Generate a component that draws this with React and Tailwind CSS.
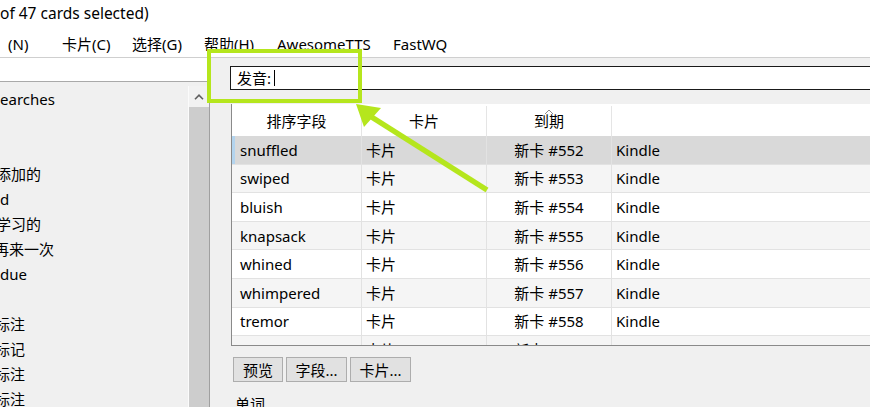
const menus = [
  ['(N)', 'w-[54px]'],
  ['卡片(C)', 'w-[70px]'],
  ['选择(G)', 'w-[72px]'],
  ['帮助(H)', 'w-[73px]'],
  ['AwesomeTTS', 'w-[116px]'],
  ['FastWQ', 'w-[80px]'],
];

// sidebar rows, 25px apart; negative margins cut off the leading chars like the clipped tree
const side = [
  ['earches', 'ml-0'],
  ['', 'ml-0'],
  ['', 'ml-0'],
  ['添加的', 'ml-[-4px]'],
  ['d', 'ml-0'],
  ['学习的', 'ml-[-4px]'],
  ['再来一次', 'ml-[-6px]'],
  ['due', 'ml-0'],
  ['', 'ml-0'],
  ['标注', 'ml-[-5px]'],
  ['标记', 'ml-[-5px]'],
  ['标注', 'ml-[-5px]'],
  ['标注', 'ml-[-5px]'],
];

const cards = [
  ['snuffled', '新卡 #552'],
  ['swiped', '新卡 #553'],
  ['bluish', '新卡 #554'],
  ['knapsack', '新卡 #555'],
  ['whined', '新卡 #556'],
  ['whimpered', '新卡 #557'],
  ['tremor', '新卡 #558'],
  ['sneaked', '新卡 #559'],
];

function Row({ word, due, idx }) {
  const selected = idx === 0;
  const bg = selected ? 'bg-[#d9d9d9]' : idx % 2 === 1 ? 'bg-[#f5f5f5]' : 'bg-white';
  return (
    <div className={`flex h-[28.6px] shrink-0 border-b border-[#e2e2e2] ${bg}`}>
      <div className={`w-[130px] flex items-center pl-[5px] border-l-[3px] border-r border-r-[#e2e2e2] ${selected ? 'border-l-[#b3d4ee]' : 'border-l-transparent'}`}>{word}</div>
      <div className="w-[125px] flex items-center pl-[4px] border-r border-[#e2e2e2]">卡片</div>
      <div className="w-[125px] flex items-center justify-center border-r border-[#e2e2e2]">{due}</div>
      <div className="flex-1 flex items-center pl-[4px]">Kindle</div>
    </div>
  );
}

export default function App() {
  return (
    <div className="relative w-[870px] h-[407px] overflow-hidden bg-white text-black font-['Noto_Sans','Noto_Sans_CJK_SC',sans-serif]">
      <div className="h-[28px] flex items-center text-[15.5px] leading-none whitespace-nowrap">of 47 cards selected)</div>

      <div className="h-[29px] flex items-center pl-[8px] pt-[3px] text-[15px] leading-none whitespace-nowrap">
        {menus.map(([m, w]) => (
          <span key={m} className={`${w} shrink-0`}>{m}</span>
        ))}
      </div>

      <div className="flex h-[350px] border-t border-[#cfcfcf]">
        <aside className="w-[210px] shrink-0 flex flex-col bg-[#f0f0f0] border-r border-[#a0a0a0]">
          <div className="h-[24px] shrink-0 bg-white border-b border-[#a9a9a9]" />
          <div className="flex flex-1 min-h-0 pt-[4px]">
            <div className="w-[188px] overflow-hidden text-[15px] leading-[20px]">
              {side.map(([t, ml], i) => (
                <div key={i} className="h-[25px] flex items-center whitespace-nowrap">
                  <span className={ml}>{t}</span>
                </div>
              ))}
            </div>
            <div className="w-[21px] flex flex-col border-l border-[#fbfbfb]">
              <div className="h-[21px] shrink-0 flex items-center justify-center bg-[#f2f2f2]">
                <svg width="10" height="6" viewBox="0 0 10 6">
                  <path d="M1 5.2 L5 1.2 L9 5.2" fill="none" stroke="#606060" strokeWidth="1.6" />
                </svg>
              </div>
              <div className="flex-1 bg-[#cdcdcd]" />
            </div>
          </div>
        </aside>

        <main className="flex-1 min-w-0 overflow-hidden bg-[#f0f0f0] pt-[8px] pl-[20px] text-[15px] leading-[20px]">
          <div className="w-[700px] h-[24px] bg-white border border-[#1a1a1a] flex items-center pl-[6px]">
            <span>发音:</span>
            <span className="inline-block w-px h-[16px] bg-black ml-[3px]" />
          </div>

          <div className="ml-[1px] mt-[14px] w-[720px] border-l border-b border-[#8a8a8a]">
            <div className="flex h-[32px] bg-white pt-[2px]">
              <div className="w-[130px] flex items-center justify-center border-r border-[#e5e5e5]">排序字段</div>
              <div className="w-[125px] flex items-center justify-center border-r border-[#e5e5e5]">卡片</div>
              <div className="relative w-[125px] flex items-center justify-center border-r border-[#e5e5e5]">
                <svg className="absolute left-[57px] top-[3px]" width="10" height="6" viewBox="0 0 10 6">
                  <path d="M1 5 L5 1 L9 5" fill="none" stroke="#8c8c8c" strokeWidth="1" />
                </svg>
                到期
              </div>
              <div className="flex-1" />
            </div>
            <div className="h-[209px] overflow-hidden flex flex-col">
              {cards.map(([w, d], i) => (
                <Row key={w} word={w} due={d} idx={i} />
              ))}
            </div>
          </div>

          <div className="flex gap-[3px] ml-[3px] mt-[11px]">
            {[['预览', 'w-[50px]'], ['字段...', 'w-[61px]'], ['卡片...', 'w-[61px]']].map(([b, w]) => (
              <button key={b} className={`${w} h-[25px] bg-[#e1e1e1] border border-[#adadad] flex items-center justify-center`}>{b}</button>
            ))}
          </div>

          <div className="ml-[5px] mt-[12px]">单词</div>
        </main>
      </div>

      <div className="absolute left-[207px] top-[49px] w-[155px] h-[54px] border-4 border-[#b5e61d] pointer-events-none" />
      <svg className="absolute inset-0 pointer-events-none" width="870" height="407" viewBox="0 0 870 407">
        <polygon points="356,104 381,108 364,127" fill="#b5e61d" />
        <line x1="370" y1="116" x2="487" y2="190" stroke="#b5e61d" strokeWidth="5.5" />
      </svg>
    </div>
  );
}
